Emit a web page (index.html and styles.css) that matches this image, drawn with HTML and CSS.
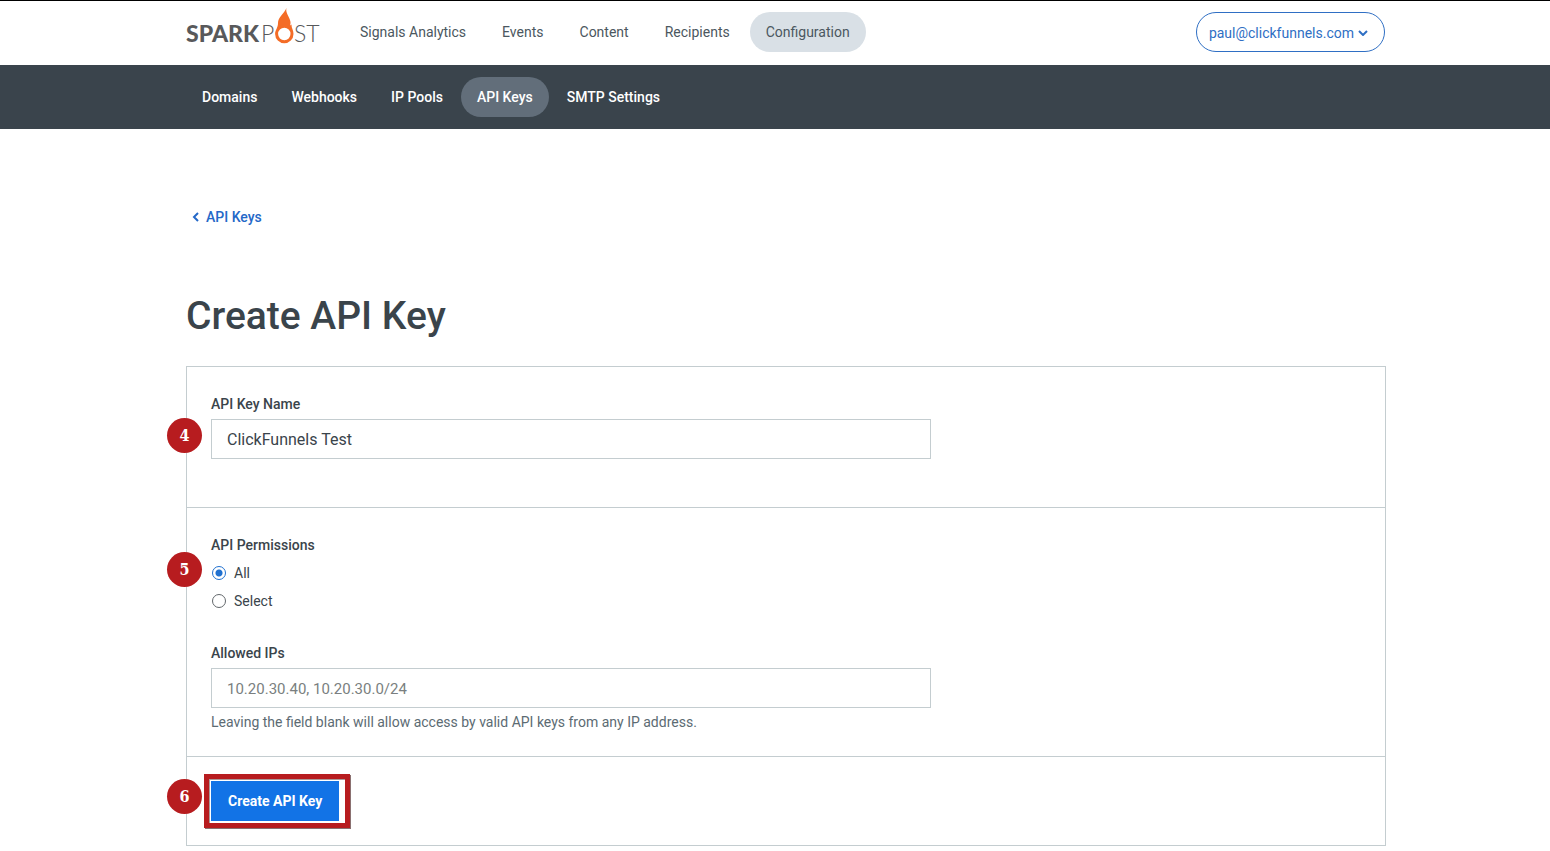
FILE: index.html
```html
<!DOCTYPE html>
<html lang="en">
<head>
<meta charset="utf-8">
<title>Create API Key | SparkPost</title>
<link rel="stylesheet" href="styles.css">
</head>
<body>
<header class="topbar">
  <a class="logo" href="#" aria-label="SparkPost">
    <svg width="134" height="36" viewBox="0 0 134 36">
      <text class="logo-bold" x="0" y="33">SPARK</text>
      <text class="logo-thin" x="75" y="33">P</text>
      <path fill="#f46c26" fill-rule="evenodd" d="M100.500 -1C99 4 104 8 104.500 13C104.600 14.500 104.400 15.500 104 16.500L105.500 15.500C105.300 19 107.500 21 107.500 25A9.200 9.200 0 0 1 89.100 25C89.100 21 92 19 92 14C92 8 98 5 100.500 -1ZM98.300 18.800A6.200 6.200 0 1 0 98.300 31.200A6.200 6.200 0 1 0 98.300 18.800Z"/>
      <text class="logo-thin" x="108" y="33">ST</text>
    </svg>
  </a>
  <nav class="nav" aria-label="Main">
    <a class="nav-link" href="#">Signals Analytics</a>
    <a class="nav-link" href="#">Events</a>
    <a class="nav-link" href="#">Content</a>
    <a class="nav-link" href="#">Recipients</a>
    <a class="nav-link nav-link-active" href="#">Configuration</a>
  </nav>
  <button class="account" type="button">paul@clickfunnels.com
    <svg width="10" height="6" viewBox="0 0 10 6"><path d="M1 1l4 4 4-4" fill="none" stroke="currentColor" stroke-width="2"/></svg>
  </button>
</header>
<nav class="subnav" aria-label="Configuration">
  <a class="nav-link" href="#">Domains</a>
  <a class="nav-link" href="#">Webhooks</a>
  <a class="nav-link" href="#">IP Pools</a>
  <a class="nav-link nav-link-active" href="#">API Keys</a>
  <a class="nav-link" href="#">SMTP Settings</a>
</nav>
<main class="page">
  <a class="back" href="#"><svg width="7" height="10" viewBox="0 0 7 10"><path d="M6 1L2 5l4 4" fill="none" stroke="currentColor" stroke-width="2"/></svg>API Keys</a>
  <h1 class="title">Create API Key</h1>
  <form class="panel">
    <section class="section section-name">
      <span class="step step-name">4</span>
      <label class="label" for="key-name">API Key Name</label>
      <input class="field" id="key-name" type="text" value="ClickFunnels Test">
    </section>
    <section class="section section-access">
      <span class="step step-access">5</span>
      <fieldset class="choices">
        <legend class="label">API Permissions</legend>
        <label class="choice"><input class="radio" type="radio" name="grants" checked>All</label>
        <label class="choice"><input class="radio" type="radio" name="grants">Select</label>
      </fieldset>
      <label class="label" for="ips">Allowed IPs</label>
      <input class="field" id="ips" type="text" placeholder="10.20.30.40, 10.20.30.0/24" aria-describedby="ips-help">
      <p class="help" id="ips-help">Leaving the field blank will allow access by valid API keys from any IP address.</p>
    </section>
    <section class="section section-submit">
      <span class="step step-submit">6</span>
      <div class="highlight"><button class="submit" type="button">Create API Key</button></div>
    </section>
  </form>
</main>
</body>
</html>
```
FILE: styles.css
```css
* { box-sizing: border-box; }
body {
  margin: 0;
  background: #fff;
  color: #3a444b;
  font: 14px/20px Roboto, "Liberation Sans", sans-serif;
}
a { color: inherit; text-decoration: none; }
button, input { font: inherit; }
.topbar {
  display: flex;
  align-items: center;
  height: 65px;
  padding: 0 165px 2px 186px;
  border-top: 1px solid #000;
}
.logo { height: 36px; margin: 0 24px 10px 0; }
.logo svg { display: block; overflow: visible; }
.logo-bold { font: 900 23px Lato, sans-serif; fill: #58595b; }
.logo-thin { font: 300 23px Lato, sans-serif; fill: #58595b; }
.nav { display: flex; gap: 4px; }
.nav-link { padding: 10px 16px; border-radius: 20px; white-space: nowrap; }
.nav .nav-link { color: #4b5760; }
.nav .nav-link-active { background: #d9e0e6; }
.account {
  display: flex;
  align-items: center;
  gap: 4px;
  height: 40px;
  margin-left: auto;
  padding: 2px 16px 0 12px;
  border: 1px solid #2f6fc4;
  border-radius: 20px;
  background: #fff;
  color: #2f6fc4;
}
.subnav {
  display: flex;
  align-items: center;
  gap: 2px;
  height: 64px;
  padding: 0 186px;
  background: #3a444c;
  color: #fff;
  font-weight: 500;
}
.subnav .nav-link-active { background: #626e7a; }
.page { padding: 78px 164px 5px 186px; }
.back {
  display: inline-flex;
  align-items: center;
  gap: 7px;
  padding-left: 6px;
  color: #2468c8;
  font-weight: 500;
}
.title { margin: 65px 0 26px; font-size: 39px; line-height: 48px; font-weight: 500; }
.panel { border: 1px solid #c4cdd0; }
.section { position: relative; padding: 27px 24px; }
.section + .section { border-top: 1px solid #c4cdd0; }
.section-name { padding-bottom: 48px; }
.section-access { padding-bottom: 24px; }
.section-submit { padding: 17px; }
.label { display: block; margin-bottom: 5px; padding: 0; font-weight: 500; }
.field {
  display: block;
  width: 100%;
  max-width: 720px;
  height: 40px;
  padding: 0 15px;
  border: 1px solid #c4cdd0;
  background: #fff;
  color: #3a444b;
  font-size: 16px;
}
.field::placeholder { color: #7a7f80; font-size: 15px; opacity: 1; }
.choices { margin: 0 0 28px; padding: 0; border: 0; }
.choice { display: flex; align-items: center; gap: 8px; height: 28px; }
.choices .label { margin-bottom: 4px; }
.radio {
  appearance: none;
  width: 14px;
  height: 14px;
  margin: 0 0 0 1px;
  border: 1px solid #62676b;
  border-radius: 50%;
}
.radio:checked { border: 1px solid #1f70d0; background: radial-gradient(circle, #1f70d0 3px, #fff 4px); }
.help { margin: 4px 0 0; color: #5c6b73; }
.step {
  position: absolute;
  left: -20px;
  width: 35px;
  height: 35px;
  border-radius: 50%;
  background: #b71c1f;
  color: #fff;
  font: bold 16px/35px "DejaVu Serif Condensed", "DejaVu Serif", serif;
  text-align: center;
}
.step-name { top: 51px; }
.step-access { top: 44px; }
.step-submit { top: 22px; }
.highlight {
  width: fit-content;
  padding: 2px 6px 2px 2px;
  border: 5px solid #b71c1f;
  box-shadow: 1px 1px 0 #8a7070, inset 1px 1px 0 #a99;
}
.submit {
  display: block;
  height: 40px;
  padding: 0 17px;
  border: 0;
  background: #1273e6;
  color: #fff;
  font-weight: 700;
}
```
